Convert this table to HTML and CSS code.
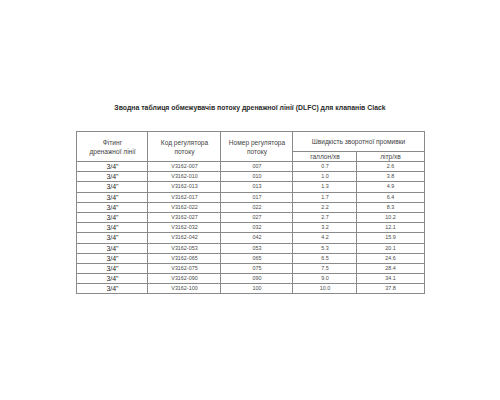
FILE: index.html
```html
<!DOCTYPE html>
<html lang="uk">
<head>
<meta charset="utf-8">
<link rel="stylesheet" href="styles.css">
</head>
<body>
<div class="page">
  <h1 class="title">Зводна таблиця обмежувачів потоку дренажної лінії (DLFC) для клапанів Clack</h1>
  <table class="tbl">
    <colgroup>
      <col class="c1"><col class="c2"><col class="c3"><col class="c4"><col class="c5">
    </colgroup>
    <thead>
      <tr class="h1">
        <th rowspan="2">Фітинг<br>дренажної лінії</th>
        <th rowspan="2">Код регулятора<br>потоку</th>
        <th rowspan="2">Номер регулятора<br>потоку</th>
        <th colspan="2">Швидкість зворотної промивки</th>
      </tr>
      <tr class="h2">
        <th>галлон/хв</th>
        <th>літр/хв</th>
      </tr>
    </thead>
    <tbody>
      <tr><td class="fit">3/4"</td><td>V3162-007</td><td>007</td><td>0.7</td><td>2.6</td></tr>
      <tr><td class="fit">3/4"</td><td>V3162-010</td><td>010</td><td>1.0</td><td>3.8</td></tr>
      <tr><td class="fit">3/4"</td><td>V3162-013</td><td>013</td><td>1.3</td><td>4.9</td></tr>
      <tr><td class="fit">3/4"</td><td>V3162-017</td><td>017</td><td>1.7</td><td>6.4</td></tr>
      <tr><td class="fit">3/4"</td><td>V3162-022</td><td>022</td><td>2.2</td><td>8.3</td></tr>
      <tr><td class="fit">3/4"</td><td>V3162-027</td><td>027</td><td>2.7</td><td>10.2</td></tr>
      <tr><td class="fit">3/4"</td><td>V3162-032</td><td>032</td><td>3.2</td><td>12.1</td></tr>
      <tr><td class="fit">3/4"</td><td>V3162-042</td><td>042</td><td>4.2</td><td>15.9</td></tr>
      <tr><td class="fit">3/4"</td><td>V3162-053</td><td>053</td><td>5.3</td><td>20.1</td></tr>
      <tr><td class="fit">3/4"</td><td>V3162-065</td><td>065</td><td>6.5</td><td>24.6</td></tr>
      <tr><td class="fit">3/4"</td><td>V3162-075</td><td>075</td><td>7.5</td><td>28.4</td></tr>
      <tr><td class="fit">3/4"</td><td>V3162-090</td><td>090</td><td>9.0</td><td>34.1</td></tr>
      <tr><td class="fit">3/4"</td><td>V3162-100</td><td>100</td><td>10.0</td><td>37.8</td></tr>
    </tbody>
  </table>
</div>
</body>
</html>
```

FILE: styles.css
```css
html, body {
  margin: 0;
  padding: 0;
  background: #ffffff;
}
body {
  width: 500px;
  height: 400px;
  font-family: "Liberation Sans", Arial, sans-serif;
  color: #444;
}
.page {
  padding-top: 103px;
  display: flex;
  flex-direction: column;
  align-items: center;
}
.title {
  margin: 0 0 19px 0;
  font-size: 6.9px;
  line-height: 9px;
  font-weight: bold;
  color: #2a2a2a;
  text-align: center;
}
.tbl {
  border-collapse: collapse;
  table-layout: fixed;
  width: 347px;
  margin-left: 1px;
}
.c1 { width: 71px; }
.c2 { width: 73px; }
.c3 { width: 72px; }
.c4 { width: 64px; }
.c5 { width: 67px; }
.tbl th, .tbl td {
  border: 1px solid #8a8a8a;
  padding: 0;
  text-align: center;
  font-weight: normal;
  overflow: hidden;
  white-space: nowrap;
}
.tbl th {
  font-size: 6.6px;
  line-height: 9px;
  color: #444;
}
.h1 th { height: 19px; }
.h2 th { height: 9px; line-height: 8px; }
.tbl td {
  height: 9.2px;
  font-size: 5.4px;
  line-height: 9px;
  color: #4a4a4a;
}
.tbl td.fit {
  font-size: 7px;
  color: #2a2a2a;
}
```
